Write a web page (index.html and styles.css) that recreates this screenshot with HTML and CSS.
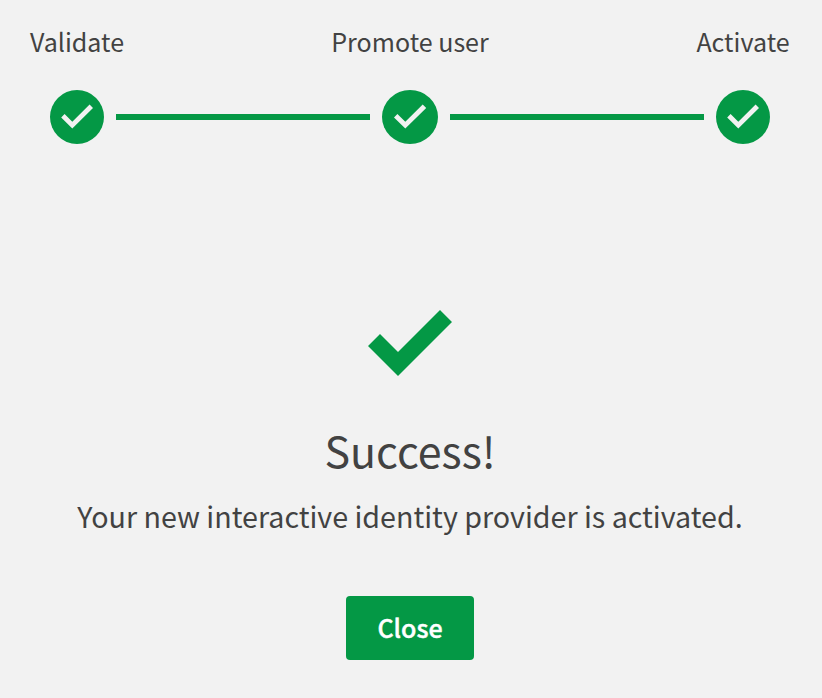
FILE: index.html
```html
<!DOCTYPE html>
<html lang="en">
<head>
<meta charset="utf-8">
<title>Identity provider</title>
<link rel="stylesheet" href="styles.css">
</head>
<body>
<main class="dialog">
  <div class="labels">
    <span class="label">Validate</span>
    <span class="label">Promote user</span>
    <span class="label">Activate</span>
  </div>
  <div class="track">
    <svg class="step" viewBox="0 0 54 54"><circle cx="27" cy="27" r="27"/><path d="M11.2 27.5 14.6 24.1 22.3 31.7 39.6 14.5 43 17.9 22.3 38.6Z"/></svg>
    <div class="line"></div>
    <svg class="step step-wide" viewBox="0 0 56 54"><ellipse cx="28" cy="27" rx="28" ry="27"/><path d="M12 27.5 15.4 24.1 23.3 31.7 40.7 14.5 44.2 17.9 23.3 38.6Z"/></svg>
    <div class="line"></div>
    <svg class="step" viewBox="0 0 54 54"><circle cx="27" cy="27" r="27"/><path d="M11.2 27.5 14.6 24.1 22.3 31.7 39.6 14.5 43 17.9 22.3 38.6Z"/></svg>
  </div>
  <section class="result">
    <svg class="check" viewBox="0 0 84 66"><path d="M0 36 12 24 30 42 72 0 84 12 30 66Z"/></svg>
    <h1 class="title">Success!</h1>
    <p class="message">Your new interactive identity provider is activated.</p>
    <button class="close" type="button">Close</button>
  </section>
</main>
</body>
</html>
```

FILE: styles.css
```css
* {
  box-sizing: border-box;
}

body {
  margin: 0;
  background: #f2f2f2;
  color: #424242;
  font-family: "Noto Sans CJK SC", "Liberation Sans", sans-serif;
}

.dialog {
  width: 822px;
  height: 698px;
  padding-top: 24px;
  overflow: hidden;
}

.labels {
  display: grid;
  grid-template-columns: 154px 1fr 154px;
  width: 820px;
  height: 34px;
  font-size: 25.05px;
  line-height: 34px;
  text-align: center;
  white-space: nowrap;
}

.track {
  display: flex;
  align-items: center;
  gap: 12px;
  width: 720px;
  margin: 32px 0 0 50px;
}

.step {
  flex: none;
  width: 54px;
  height: 54px;
}

.step-wide {
  width: 56px;
}

.step circle,
.step ellipse {
  fill: #049845;
}

.step path {
  fill: #f2f2f2;
}

.line {
  flex: 1;
  height: 6px;
  background: #049845;
}

.result {
  display: flex;
  flex-direction: column;
  align-items: center;
  width: 820px;
  padding-top: 166px;
}

.check {
  width: 84px;
  height: 66px;
  fill: #049845;
}

.title {
  margin: 41px 0 0;
  font-size: 42.95px;
  font-weight: 400;
  line-height: 64px;
}

.message {
  margin: 15px 0 0;
  font-size: 28.65px;
  line-height: 40px;
  white-space: nowrap;
}

.close {
  width: 128px;
  height: 64px;
  margin: 60px 0 0;
  padding: 0 0 2px;
  border: 0;
  border-radius: 4px;
  background: #049845;
  color: #fff;
  font-family: inherit;
  font-size: 25.05px;
  font-weight: 500;
  line-height: 62px;
  -webkit-text-stroke: 0.4px #fff;
}
```
